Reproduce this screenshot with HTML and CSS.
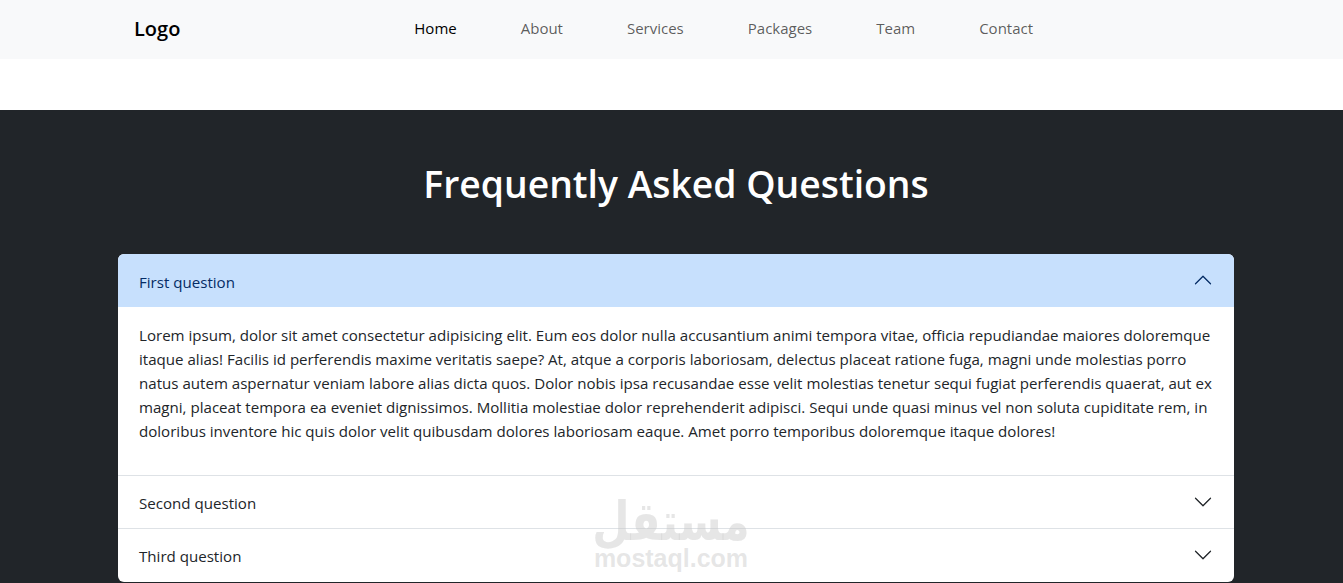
FILE: index.html
```html
<!DOCTYPE html>
<html lang="en">
<head>
  <meta charset="UTF-8">
  <title>FAQ</title>
  <link rel="stylesheet" href="styles.css">
</head>
<body>
  <nav class="navbar">
    <a class="brand" href="#">Logo</a>
    <ul class="nav-links">
      <li><a class="active" href="#">Home</a></li>
      <li><a href="#">About</a></li>
      <li><a href="#">Services</a></li>
      <li><a href="#">Packages</a></li>
      <li><a href="#">Team</a></li>
      <li><a href="#">Contact</a></li>
    </ul>
  </nav>

  <section class="faq">
    <h1>Frequently Asked Questions</h1>

    <div class="accordion">
      <div class="accordion-item">
        <div class="accordion-header open">
          <span>First question</span>
          <svg class="chevron flip" viewBox="0 0 16 16"><path fill-rule="evenodd" d="M1.646 4.646a.5.5 0 0 1 .708 0L8 10.293l5.646-5.647a.5.5 0 0 1 .708.708l-6 6a.5.5 0 0 1-.708 0l-6-6a.5.5 0 0 1 0-.708z"/></svg>
        </div>
        <div class="accordion-body">
          <p>Lorem ipsum, dolor sit amet consectetur adipisicing elit. Eum eos dolor nulla accusantium animi tempora vitae, officia repudiandae maiores doloremque itaque alias! Facilis id perferendis maxime veritatis saepe? At, atque a corporis laboriosam, delectus placeat ratione fuga, magni unde molestias porro natus autem aspernatur veniam labore alias dicta quos. Dolor nobis ipsa recusandae esse velit molestias tenetur sequi fugiat perferendis quaerat, aut ex magni, placeat tempora ea eveniet dignissimos. Mollitia molestiae dolor reprehenderit adipisci. Sequi unde quasi minus vel non soluta cupiditate rem, in doloribus inventore hic quis dolor velit quibusdam dolores laboriosam eaque. Amet porro temporibus doloremque itaque dolores!</p>
        </div>
      </div>
      <div class="accordion-item">
        <div class="accordion-header">
          <span>Second question</span>
          <svg class="chevron" viewBox="0 0 16 16"><path fill-rule="evenodd" d="M1.646 4.646a.5.5 0 0 1 .708 0L8 10.293l5.646-5.647a.5.5 0 0 1 .708.708l-6 6a.5.5 0 0 1-.708 0l-6-6a.5.5 0 0 1 0-.708z"/></svg>
        </div>
      </div>
      <div class="accordion-item">
        <div class="accordion-header last">
          <span>Third question</span>
          <svg class="chevron" viewBox="0 0 16 16"><path fill-rule="evenodd" d="M1.646 4.646a.5.5 0 0 1 .708 0L8 10.293l5.646-5.647a.5.5 0 0 1 .708.708l-6 6a.5.5 0 0 1-.708 0l-6-6a.5.5 0 0 1 0-.708z"/></svg>
        </div>
      </div>
    </div>
  </section>

  <!-- Watermark over the page -->
  <div class="watermark">
    <div class="watermark-ar" lang="ar" dir="rtl">مستقل</div>
    <div class="watermark-en">mostaql.com</div>
  </div>
</body>
</html>
```

FILE: styles.css
```css
* {
  box-sizing: border-box;
}
html, body {
  height: 583px;
  overflow: hidden;
}
body {
  margin: 0;
  position: relative;
  font-family: "Open Sans", "Noto Sans", sans-serif;
  font-size: 15.1px;
  line-height: 24px;
  color: #212529;
  background: #fff;
}
a {
  text-decoration: none;
  color: inherit;
}
.navbar {
  height: 59px;
  background: #f8f9fa;
  display: flex;
  align-items: center;
  padding: 0 92px 4px 134px;
}
.brand {
  font-size: 20px;
  font-weight: 600;
  color: #000;
  margin-right: 16px;
  margin-top: 2px;
}
.nav-links {
  flex: 1;
  display: flex;
  justify-content: center;
  gap: 64px;
  list-style: none;
  margin: 0;
  padding: 0;
  font-size: 15px;
  color: rgba(0, 0, 0, 0.65);
}
.nav-links .active {
  color: #000;
}
.faq {
  margin-top: 51px;
  height: 473px;
  background: #212529;
  padding: 48px 109px 0 118px;
}
.faq h1 {
  margin: 0 0 44px;
  height: 52px;
  font-size: 37.3px;
  line-height: 52px;
  font-weight: 600;
  color: #fff;
  text-align: center;
}
.accordion {
  background: #fff;
  border-radius: 6px;
  overflow: hidden;
}
.accordion-item + .accordion-item {
  border-top: 1px solid #dee2e6;
}
.accordion-header {
  height: 52px;
  display: flex;
  align-items: center;
  justify-content: space-between;
  padding: 2px 21px 0 21px;
}
.accordion-header.open, .accordion-header.last {
  height: 53px;
}
.accordion-header.last {
  padding-top: 1px;
}
.accordion-header.open {
  background: #c7e0fd;
  color: #052c65;
}
.chevron {
  width: 20px;
  height: 20px;
  fill: #212529;
  margin-top: -3px;
}
.last .chevron {
  margin-top: -2px;
}
.chevron.flip {
  fill: #052c65;
  transform: rotate(180deg);
}
.accordion-body {
  padding: 16px 21px;
}
.accordion-body p {
  margin: 0 0 16px;
}
.watermark {
  position: absolute;
  left: 576px;
  top: 490px;
  width: 190px;
  text-align: center;
  color: rgba(200, 200, 200, 0.45);
  font-weight: 700;
  pointer-events: none;
}
.watermark-ar {
  font-family: "DejaVu Sans", sans-serif;
  font-size: 43px;
  line-height: 62px;
  transform: scaleY(1.25);
}
.watermark-en {
  font-family: "Liberation Sans", sans-serif;
  font-size: 25px;
  line-height: 22px;
  margin-top: -5px;
}
```
